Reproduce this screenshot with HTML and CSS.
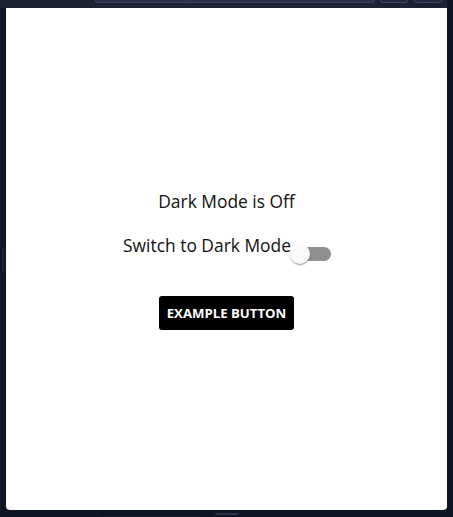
FILE: index.html
```html
<!DOCTYPE html>
<html lang="en">
<head>
<meta charset="utf-8">
<title>Dark Mode</title>
<link rel="stylesheet" href="styles.css">
</head>
<body>
<div class="topbar">
  <div class="tabs">
    <div class="tab tab-a"></div>
    <div class="tab tab-b"></div>
  </div>
  <div class="mini"></div>
  <div class="mini"></div>
</div>
<div class="frame">
  <div class="side side-left"><div class="grip"></div></div>
  <main class="panel">
    <p class="status">Dark Mode is Off</p>
    <label class="toggle-row">
      <span class="toggle-label">Switch to Dark Mode</span>
      <span class="switch">
        <span class="thumb"></span>
        <span class="track"></span>
      </span>
    </label>
    <button class="btn" type="button">Example Button</button>
  </main>
  <div class="side side-right"></div>
</div>
<div class="bottombar">
  <div class="bottom-line"></div>
  <div class="bottom-grip"></div>
</div>
</body>
</html>
```
FILE: styles.css
```css
* { box-sizing: border-box; }
html, body { margin: 0; padding: 0; height: 100%; }
body {
  background: #0f1524;
  display: flex;
  flex-direction: column;
  font-family: "Open Sans", "Noto Sans", sans-serif;
  overflow: hidden;
}
.topbar {
  height: 8px;
  flex: none;
  display: flex;
  align-items: flex-start;
  background: #1d2333;
  margin-right: 6px;
  padding-left: 95px;
}
.tabs {
  width: 280px;
  height: 3px;
  display: flex;
  border: 1px solid #3a4360;
  border-top: none;
  border-radius: 0 0 4px 4px;
  background: #2b3248;
}
.tab-a { width: 91px; border-right: 1px solid #3a4360; }
.tab-b { flex: 1; }
.mini {
  width: 28px;
  height: 3px;
  margin-left: 5px;
  border: 1px solid #3a4360;
  border-top: none;
  border-radius: 0 0 4px 4px;
  background: #222a3d;
}
.mini + .mini { margin-left: 6px; }
.frame {
  flex: 1;
  display: flex;
}
.side { width: 6px; flex: none; display: flex; align-items: center; }
.grip {
  width: 2px;
  height: 26px;
  margin-left: 2px;
  margin-top: 2px;
  background: #1f2638;
  border-radius: 1px;
}
.side-right { width: 6px; }
.panel {
  flex: 1;
  background: #ffffff;
  border-radius: 0 0 4px 4px;
  display: flex;
  flex-direction: column;
  align-items: center;
  justify-content: center;
  color: #111;
}
.status {
  margin: 0;
  font-size: 17.4px;
  line-height: 24px;
}
.toggle-row {
  margin-top: 20px;
  display: flex;
  align-items: flex-end;
  padding-left: 1px;
}
.toggle-label {
  font-size: 17.4px;
  line-height: 24px;
}
.switch {
  display: flex;
  align-items: center;
  width: 41px;
  height: 20px;
  margin-left: -1px;
  margin-bottom: -7px;
}
.thumb {
  position: relative;
  z-index: 1;
  width: 20px;
  height: 20px;
  border-radius: 50%;
  background: #fafafa;
  box-shadow: 0 2px 1px -1px rgba(0,0,0,.2), 0 1px 1px 0 rgba(0,0,0,.14), 0 1px 3px 0 rgba(0,0,0,.12);
}
.track {
  width: 30px;
  height: 14px;
  margin-left: -9px;
  border-radius: 7px;
  background: #8f8f8f;
}
.btn {
  margin-top: 39px;
  height: 34px;
  padding: 0 8px;
  border: none;
  border-radius: 3px;
  background: #000;
  color: #fff;
  font-family: "Open Sans", "Noto Sans", sans-serif;
  font-weight: 700;
  font-size: 13.2px;
  text-transform: uppercase;
}
.bottombar {
  height: 7px;
  flex: none;
  position: relative;
}
.bottom-grip {
  position: absolute;
  left: 215px;
  top: 3px;
  width: 24px;
  height: 2px;
  border-radius: 1px;
  background: #2a3146;
}
.bottom-line {
  position: absolute;
  left: 102px;
  top: 6px;
  width: 98px;
  height: 1px;
  background: #1a2132;
}
```
